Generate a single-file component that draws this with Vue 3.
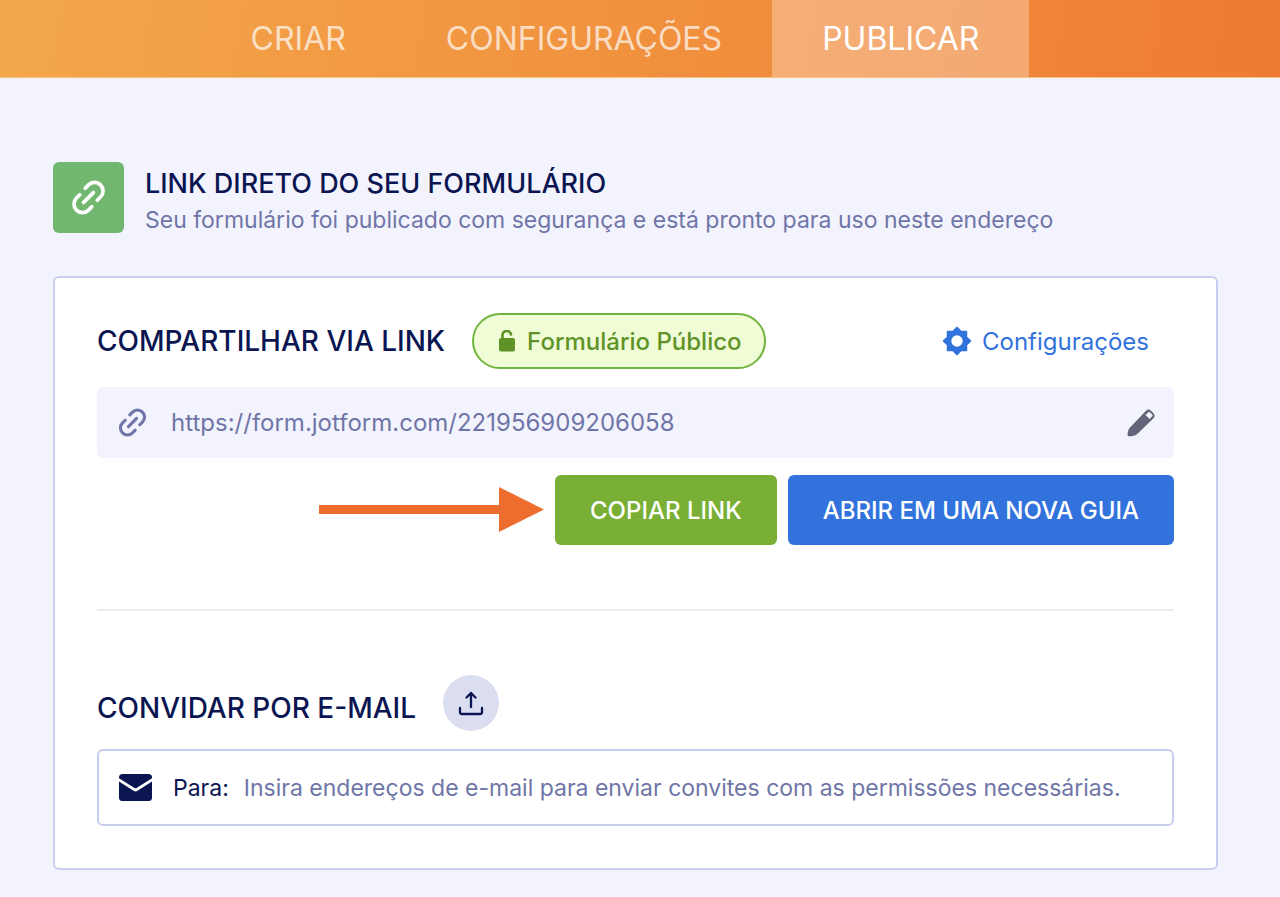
<template>
  <div class="page">
    <nav class="tabs">
      <a
        v-for="tab in tabs"
        :key="tab"
        href="#"
        class="tab"
        :class="{ active: tab === activeTab }"
        @click.prevent="activeTab = tab"
      >{{ tab }}</a>
    </nav>

    <main class="content">
      <header class="intro">
        <div class="intro-icon">
          <svg width="35" height="35" viewBox="0 0 32 32" class="link-icon">
            <path d="M13 7.5l3-3a7.6 7.6 0 0 1 11 11L24 18.500M8 13.500l-3 3a7.600 7.600 0 0 0 11 11L19 24.500M11.500 20.500l9-9" />
          </svg>
        </div>
        <div class="intro-text">
          <h1>LINK DIRETO DO SEU FORMULÁRIO</h1>
          <p>Seu formulário foi publicado com segurança e está pronto para uso neste endereço</p>
        </div>
      </header>

      <section class="card">
        <div class="share-head">
          <h2><label for="form-url">COMPARTILHAR VIA LINK</label></h2>
          <button type="button" class="badge">
            <svg width="18" height="22" viewBox="0 0 18 22">
              <path d="M4.500 10V6a4.300 4.300 0 0 1 8.500-1.500" fill="none" stroke="currentColor" stroke-width="2.600" stroke-linecap="round" />
              <rect x="1" y="8" width="16" height="13.500" rx="2" fill="currentColor" />
            </svg>
            Formulário Público
          </button>
          <a href="#" class="settings" @click.prevent>
            <svg width="30" height="30" viewBox="0 0 30 30">
              <path
                d="M15 1.800L18.800 5.800L24.300 5.700L24.200 11.200L28.200 15L24.200 18.800L24.300 24.300L18.800 24.200L15 28.200L11.200 24.200L5.700 24.300L5.800 18.800L1.800 15L5.800 11.200L5.700 5.700L11.200 5.800Z"
                fill="currentColor" stroke="currentColor" stroke-width="2" stroke-linejoin="round"
              />
              <circle cx="15" cy="15" r="5.700" fill="#fff" />
            </svg>
            Configurações
          </a>
        </div>

        <div class="url-box">
          <svg width="29" height="29" viewBox="0 0 32 32" class="link-icon">
            <path d="M13 7.500l3-3a7.600 7.600 0 0 1 11 11L24 18.500M8 13.500l-3 3a7.600 7.600 0 0 0 11 11L19 24.500M11.500 20.500l9-9" />
          </svg>
          <input id="form-url" type="text" :value="formUrl" readonly>
          <button type="button" class="edit" aria-label="Editar">
            <svg width="28" height="28" viewBox="0 0 28 28">
              <path
                fill="currentColor" fill-rule="evenodd"
                d="M1 27c-.7-.4-.5-6 2-8.500L19 1.700c1.700-1.600 3.300-1.600 5 0l2.500 2.500c1.500 1.500 1.500 3.300 0 5L10.500 24.700c-2.500 2.300-8.500 3-9.500 2.300zM18.500 6l4 4 2.700-2.700c.6-.6.6-1.100 0-1.700l-2.200-2.200c-.6-.6-1.100-.6-1.700 0z"
              />
            </svg>
          </button>
        </div>

        <div class="actions">
          <svg width="225" height="46" viewBox="0 0 225 46">
            <path d="M0 18h180V0l45 22.500L180 45V27H0z" fill="#ec6d2d" />
          </svg>
          <button type="button" class="btn copy" @click="copyLink">COPIAR LINK</button>
          <button type="button" class="btn open" @click="openLink">ABRIR EM UMA NOVA GUIA</button>
        </div>

        <hr>

        <div class="invite-head">
          <h2>CONVIDAR POR E-MAIL</h2>
          <button type="button" class="upload" aria-label="Enviar">
            <svg width="26" height="26" viewBox="0 0 26 26">
              <path d="M13 17V3M8.500 7.500L13 3l4.500 4.500M2 18v4a2 2 0 0 0 2 2h18a2 2 0 0 0 2-2v-4" />
            </svg>
          </button>
        </div>

        <div class="mail-box">
          <svg width="33" height="27" viewBox="0 0 33 27">
            <path d="M0 3.500Q0 0 3.500 0h26Q33 0 33 3.500v.7L17.500 14q-1 .6-2 0L0 4.200z" />
            <path d="M0 7.500l14.500 9.300q2 1.200 4 0L33 7.500v16q0 3.500-3.500 3.500h-26Q0 27 0 23.500z" />
          </svg>
          <label for="mail-to">Para:</label>
          <input
            id="mail-to"
            v-model="mailTo"
            type="text"
            placeholder="Insira endereços de e-mail para enviar convites com as permissões necessárias."
          >
        </div>
      </section>
    </main>
  </div>
</template>

<script setup>
import { ref } from 'vue';

const tabs = ['CRIAR', 'CONFIGURAÇÕES', 'PUBLICAR'];
const activeTab = ref('PUBLICAR');
const formUrl = 'https://form.jotform.com/221956909206058';
const mailTo = ref('');

const copyLink = () => {
  navigator.clipboard.writeText(formUrl);
};

const openLink = () => {
  window.open(formUrl, '_blank');
};
</script>

<style>
body {
  margin: 0;
  background-color: #f3f3fe;
}
</style>

<style scoped>
.page {
  min-height: 100vh;
  box-sizing: border-box;
  font-family: Inter, "Liberation Sans", sans-serif;
  color: #0a1551;
}

h1,
h2,
p {
  margin: 0;
}

button,
input {
  font-family: inherit;
  border: 0;
  padding: 0;
  background: none;
}

button {
  cursor: pointer;
}

svg {
  display: block;
  flex: none;
}

.tabs {
  display: flex;
  justify-content: center;
  height: 77px;
  padding-right: 50px;
  background: linear-gradient(100deg, #f3a74b, #ee7b31);
  border-bottom: 1px solid #f9c08c;
}

.tab {
  padding: 0 50px;
  font-size: 32px;
  line-height: 77px;
  color: rgba(255, 255, 255, 0.7);
  text-decoration: none;
}

.tab.active {
  color: #fff;
  background-color: rgba(255, 255, 255, 0.3);
}

.content {
  padding: 84px 62px 27px 53px;
}

.intro {
  display: flex;
  align-items: flex-start;
  gap: 21px;
  margin-bottom: 38px;
}

.intro-icon {
  display: flex;
  align-items: center;
  justify-content: center;
  width: 71px;
  height: 71px;
  border-radius: 6px;
  color: #fff;
  background-color: #71b76f;
}

.intro-text {
  padding-top: 4px;
}

.link-icon {
  fill: none;
  stroke: currentColor;
  stroke-width: 3.4;
  stroke-linecap: round;
}

h1,
h2 {
  font-size: 27px;
  line-height: 36px;
  font-weight: 500;
}

h2 {
  font-size: 28px;
}

.intro p {
  font-size: 23px;
  line-height: 36px;
  color: #6f76a7;
}

.card {
  padding: 35px 42px 42px;
  border: 2px solid #c8ceed;
  border-radius: 6px;
  background-color: #fff;
}

.share-head {
  display: flex;
  align-items: center;
  gap: 27px;
  margin-bottom: 18px;
}

.badge {
  display: flex;
  align-items: center;
  gap: 11px;
  height: 56px;
  padding: 0 22px 0 24px;
  border: 2px solid #72b440;
  border-radius: 28px;
  font-size: 24px;
  font-weight: 500;
  color: #5f9327;
  background-color: #f0fcd6;
}

.settings {
  display: flex;
  align-items: center;
  gap: 10px;
  margin-left: auto;
  margin-right: 25px;
  font-size: 24px;
  color: #3272dd;
  text-decoration: none;
}

.url-box {
  display: flex;
  align-items: center;
  height: 71px;
  padding: 0 19px 0 21px;
  border-radius: 6px;
  color: #6f76a7;
  background-color: #f3f3fe;
}

.url-box input {
  flex: 1;
  min-width: 0;
  margin-left: 24px;
  font-size: 24px;
  color: #6f76a7;
  outline: none;
}

.edit {
  color: #63667a;
}

.actions {
  display: flex;
  align-items: center;
  justify-content: flex-end;
  gap: 11px;
  margin-top: 17px;
}

.btn {
  height: 70px;
  padding: 0 35px;
  border-radius: 6px;
  font-size: 24px;
  font-weight: 500;
  color: #fff;
}

.copy {
  background-color: #78af34;
}

.open {
  background-color: #3272dd;
}

hr {
  height: 2px;
  margin: 64px 0;
  border: 0;
  background-color: #ececf1;
}

.invite-head {
  display: flex;
  align-items: center;
  gap: 27px;
  margin-bottom: 18px;
}

.invite-head h2 {
  padding-top: 10px;
}

.upload {
  display: flex;
  align-items: center;
  justify-content: center;
  width: 56px;
  height: 56px;
  border-radius: 50%;
  background-color: #dadef0;
}

.upload svg {
  fill: none;
  stroke: #0a1551;
  stroke-width: 2.3;
  stroke-linecap: round;
  stroke-linejoin: round;
}

.mail-box {
  display: flex;
  align-items: center;
  height: 73px;
  padding: 0 20px;
  border: 2px solid #c8ceed;
  border-radius: 6px;
  font-size: 23px;
}

.mail-box svg {
  fill: #0a1551;
}

.mail-box label {
  margin: 0 15px 0 21px;
}

.mail-box input {
  flex: 1;
  min-width: 0;
  font-size: 23px;
  color: #0a1551;
  outline: none;
}

.mail-box input::placeholder {
  color: #6f76a7;
  opacity: 1;
}
</style>
